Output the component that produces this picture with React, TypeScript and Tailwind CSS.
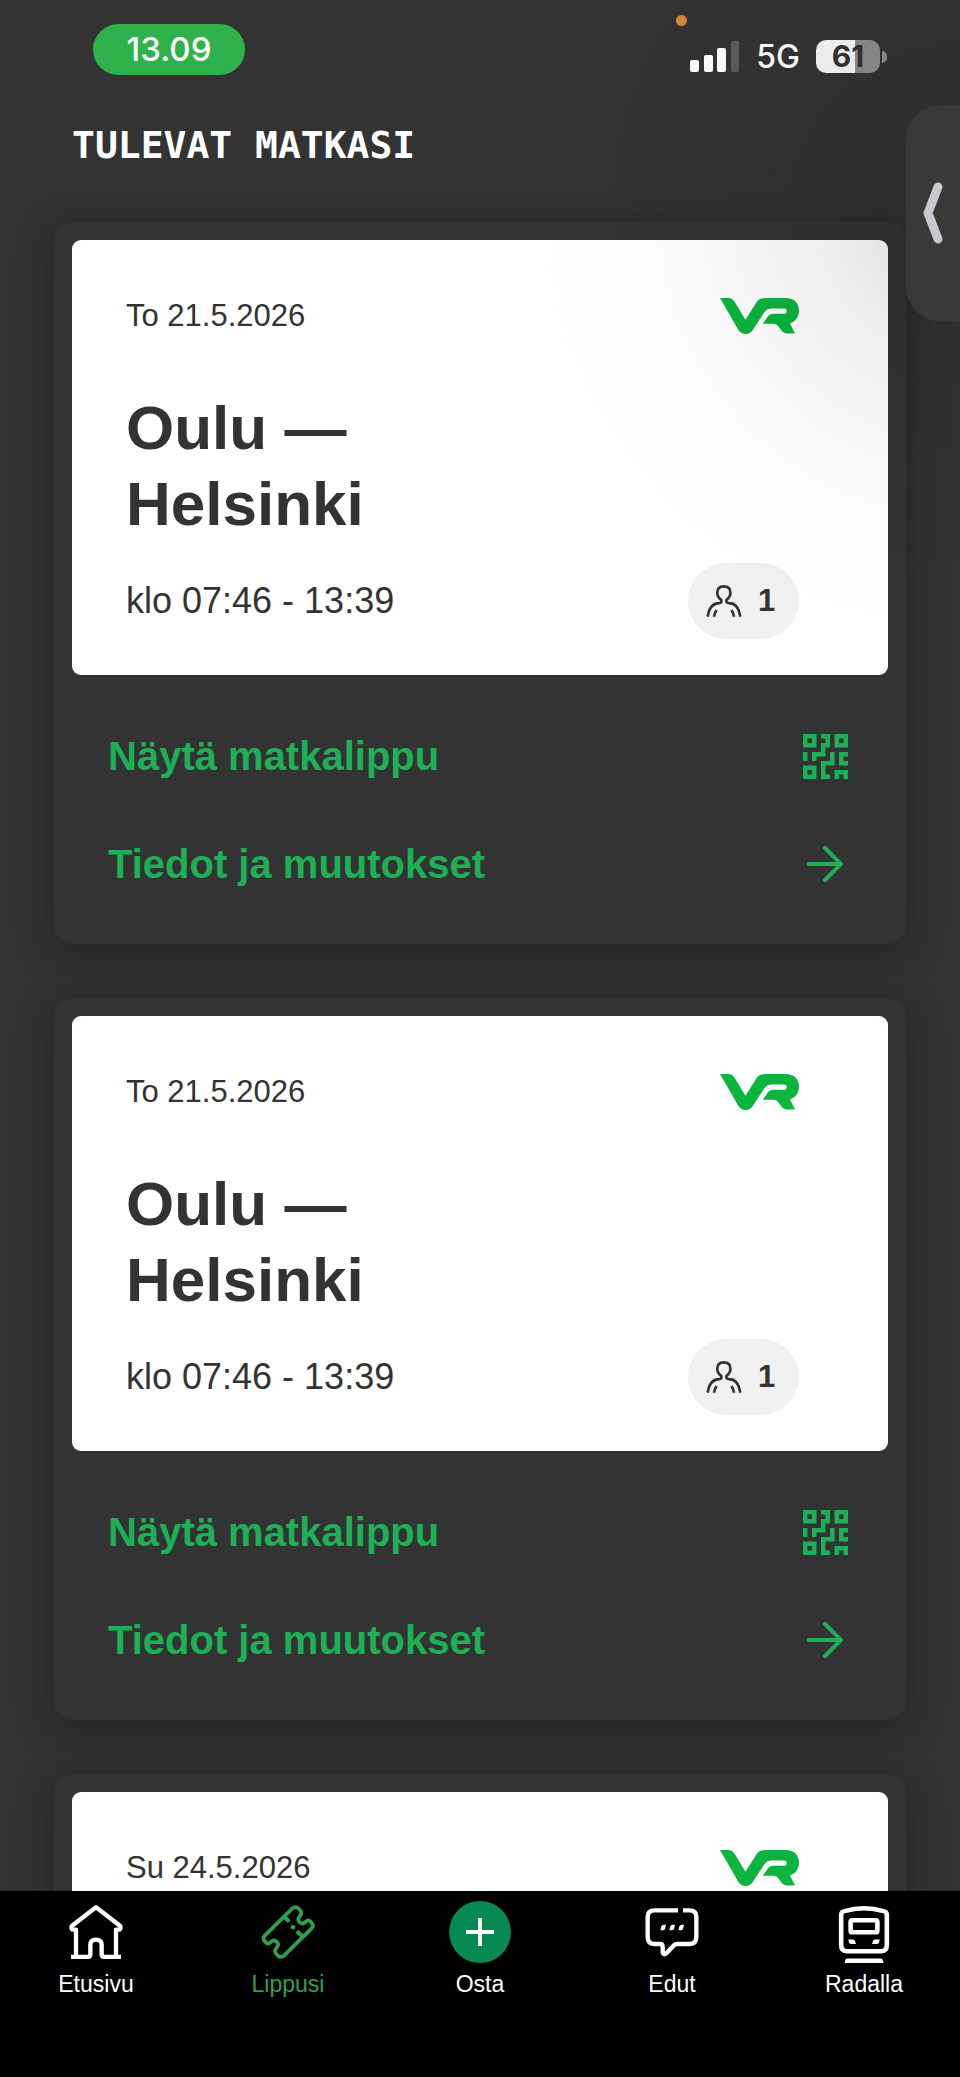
import type { ReactNode } from "react";

type Trip = {
  id: number;
  date: string;
  route?: { from: string; to: string; time: string; passengers: number };
};

const trips: Trip[] = [
  {
    id: 1,
    date: "To 21.5.2026",
    route: { from: "Oulu", to: "Helsinki", time: "klo 07:46 - 13:39", passengers: 1 },
  },
  {
    id: 2,
    date: "To 21.5.2026",
    route: { from: "Oulu", to: "Helsinki", time: "klo 07:46 - 13:39", passengers: 1 },
  },
  { id: 3, date: "Su 24.5.2026" },
];

function VrLogo() {
  return (
    <svg viewBox="0 0 236 107" className="h-9 w-[79px]" fill="#0bb43c" role="img" aria-label="VR">
      <path d="M0 0H25Q36 0 43 10L76 65L108 14Q117 0 134 0H196C222 0 236 16 236 38C236 56 226 70 209 76L224 106H203Q190 106 183 96L174 84Q169 77 160 77H128L140 59Q147 47 160 47H192Q199 47 199 39Q199 31 192 31H154Q140 31 132 43L98 95Q90 107 76 107Q63 107 55 95Z" />
    </svg>
  );
}

function PersonIcon() {
  return (
    <svg viewBox="0 0 107 97" className="h-8 w-9" fill="none" stroke="#333" strokeWidth="8" aria-hidden="true">
      <path d="M4 96C8 68 18 56 38 55Q49 54 45 45C37 39 33 34 33 24C33 10 41 4 53 4C65 4 73 10 73 24C73 34 69 39 61 45Q58 54 69 55C89 56 98 68 103 96" />
      <path d="M23 96C25 87 27 81 31 76M84 96C82 87 80 81 76 76" />
    </svg>
  );
}

function QrIcon() {
  return (
    <svg viewBox="0 0 10 10" className="size-[45px]" fill="currentColor" aria-hidden="true">
      <path fillRule="evenodd" d="M0 0h3v3H0zM1 1v1h1V1zM7 0h3v3H7zM8 1v1h1V1zM0 7h3v3H0zM1 8v1h1V8z" />
      <path d="M4 0h2v3H5v2H3v1H2V4h2V2h1V1H4zM0 4h1v2H0zM6 4h1v3H5v2h1v1H4V6h2zM8 4h2v1H9v1h1v1H8zM7 8h3v2H9V9H8v1H7z" />
    </svg>
  );
}

function ArrowIcon() {
  return (
    <svg viewBox="0 0 36 36" className="size-9" fill="none" stroke="currentColor" strokeWidth="4" aria-hidden="true">
      <path d="M0 18H33" />
      <path d="M18 2L34 18L18 34" strokeLinecap="round" />
    </svg>
  );
}

function HomeIcon() {
  return (
    <svg viewBox="0 0 160 162" className="size-[54px]" fill="none" stroke="currentColor" strokeWidth="13" aria-hidden="true">
      <path
        d="M5 156H54Q63 156 63 147V120Q63 104 80 104Q97 104 97 120V147Q97 156 106 156H155M20 156V74H14Q3 74 8 62L80 7L152 62Q157 74 146 74H140V156"
        strokeLinejoin="round"
      />
    </svg>
  );
}

function TicketIcon() {
  return (
    <svg viewBox="0 0 160 162" className="size-[54px]" fill="none" stroke="currentColor" strokeWidth="11" aria-hidden="true">
      <path
        d="M93 10Q103 2 112 11L118 18Q123 24 116 33Q106 43 115 52Q125 60 135 49Q140 44 146 48L151 54Q159 62 150 71L68 152Q58 160 49 151L43 144Q38 138 45 129Q55 119 46 110Q36 102 26 113Q21 118 15 114L10 108Q2 100 11 91Z"
        strokeLinejoin="round"
      />
      <path d="M71 37L84 50M89 64L101 69M106 79L122 92" strokeWidth="12" />
    </svg>
  );
}

function ChatIcon() {
  return (
    <svg viewBox="0 0 160 162" className="size-[54px]" fill="none" stroke="currentColor" strokeWidth="13" aria-hidden="true">
      <path d="M98 16H27Q7 16 7 36V96Q7 117 27 117H44Q52 117 52 125V142Q54 152 63 145L86 121Q90 117 96 117H133Q153 117 153 96V36Q153 16 133 16H113" />
      <path
        d="M45 76L48 64Q50 59 55 59H62L59 71Q57 76 53 76ZM72 76L75 64Q77 59 82 59H89L86 71Q84 76 80 76ZM99 76L102 64Q104 59 109 59H116L113 71Q111 76 107 76Z"
        fill="currentColor"
        stroke="none"
      />
    </svg>
  );
}

function TrainIcon() {
  return (
    <svg viewBox="-4 -15 162 190" className="h-[62px] w-[54px]" fill="none" stroke="currentColor" strokeWidth="14" aria-hidden="true">
      <path d="M7 28Q7 18 17 16Q77 -2 137 16Q147 18 147 28V120Q147 139 129 139H25Q7 139 7 120Z" />
      <rect x="36" y="44" width="82" height="37" rx="5" />
      <path
        d="M29 103H43Q48 103 50 108L52 117H38Q33 117 31 112ZM125 103H111Q106 103 104 108L102 117H116Q121 117 123 112ZM18 175L20 165Q21 161 27 161H127Q133 161 134 165L137 175Z"
        fill="currentColor"
        stroke="none"
      />
    </svg>
  );
}

function PlusIcon() {
  return (
    <span className="flex size-[62px] items-center justify-center rounded-full bg-[#058a52]">
      <svg viewBox="0 0 28 28" className="size-7" fill="none" stroke="currentColor" strokeWidth="4" aria-hidden="true">
        <path d="M14 0V28M0 14H28" />
      </svg>
    </span>
  );
}

function StatusBar() {
  return (
    <div className="flex items-start justify-between pt-6 pr-[73px] pl-[93px] font-[Inter,sans-serif] text-white">
      <div className="flex h-[51px] w-[152px] items-center justify-center rounded-full bg-[#2fb24c] text-[33px] font-medium">
        13.09
      </div>
      <div className="relative mt-4 flex h-[33px] items-center">
        <span className="absolute -top-[25px] -left-[14px] size-[11px] rounded-full bg-[#d9843b]" />
        <svg viewBox="0 0 50 31" className="h-[31px] w-[50px]" fill="#fff" aria-hidden="true">
          <rect x="0" y="19" width="9" height="12" rx="2" />
          <rect x="14" y="14" width="9" height="17" rx="2" />
          <rect x="27" y="7" width="9" height="24" rx="2" />
          <rect x="41" y="0" width="8" height="31" rx="2" fill="#5c5c5c" />
        </svg>
        <span className="ml-4 text-[32px] font-medium">5G</span>
        <span className="ml-4 flex h-[33px] w-16 items-center justify-center rounded-[10px] bg-[linear-gradient(90deg,#f7f7f7_61%,#8c8c8c_61%)] text-[30px] font-bold text-[#333]">
          61
        </span>
        <span className="ml-[2px] h-3 w-[5px] rounded-r-full bg-[#8c8c8c]" />
      </div>
    </div>
  );
}

function TripCard({ trip }: { trip: Trip }) {
  const { date, route } = trip;

  return (
    <article className="rounded-[18px] bg-[#333] px-[18px] pt-[18px] pb-[26px] shadow-[0_9px_36px_rgba(0,0,0,0.35)]">
      <div className="rounded-[9px] bg-white pt-[54px] pr-[89px] pb-9 pl-[54px] text-[#333]">
        <div className="flex h-11 items-center justify-between">
          <time className="text-[31px]">{date}</time>
          <VrLogo />
        </div>
        {route && (
          <>
            <h2 className="mt-[52px] text-[62px] leading-[76px] font-bold">
              {route.from} —<br />
              {route.to}
            </h2>
            <div className="mt-[21px] flex h-[76px] items-center justify-between">
              <p className="text-[36px]">{route.time}</p>
              <div className="flex h-full w-[111px] items-center gap-4 rounded-full bg-[#f0f0f0] pl-[18px]">
                <PersonIcon />
                <span className="text-[31px] font-bold">{route.passengers}</span>
              </div>
            </div>
          </>
        )}
      </div>
      {route && (
        <div className="mt-[27px] text-[40px] font-bold text-[#1db056]">
          <button type="button" className="flex h-[108px] w-full items-center justify-between px-9">
            Näytä matkalippu
            <span className="flex size-[54px] items-center justify-center">
              <QrIcon />
            </span>
          </button>
          <button type="button" className="flex h-[108px] w-full items-center justify-between px-9">
            Tiedot ja muutokset
            <span className="flex size-[54px] items-center justify-center">
              <ArrowIcon />
            </span>
          </button>
        </div>
      )}
    </article>
  );
}

function NavItem({ label, active, children }: { label: string; active?: boolean; children: ReactNode }) {
  return (
    <a
      href="#"
      aria-current={active ? "page" : undefined}
      className={`flex flex-1 flex-col items-center gap-[7px] ${active ? "text-[#2fa04f]" : "text-white"}`}
    >
      <span className="flex h-[62px] items-center">{children}</span>
      <span className="text-[23px] leading-7">{label}</span>
    </a>
  );
}

export default function App() {
  return (
    <div className="relative flex h-screen flex-col overflow-hidden bg-[#333] font-['Liberation_Sans',Arial,sans-serif]">
      <StatusBar />
      <main className="min-h-0 flex-1 overflow-y-auto px-[54px] [scrollbar-width:none]">
        <h1 className="mt-[46px] ml-[18px] font-['DejaVu_Sans_Mono',monospace] text-[38px] leading-[48px] font-bold text-white uppercase">
          Tulevat matkasi
        </h1>
        <div className="mt-[53px] flex flex-col gap-[54px]">
          {trips.map((trip) => (
            <TripCard key={trip.id} trip={trip} />
          ))}
        </div>
      </main>

      {/* Soft shade thrown by the collapsed video handle */}
      <div className="pointer-events-none absolute top-0 right-0 h-[700px] w-[440px] bg-[radial-gradient(circle_at_100%_213px,rgba(0,0,0,0.14),rgba(0,0,0,0.1)_80px,rgba(0,0,0,0.06)_160px,rgba(0,0,0,0.02)_290px,transparent_430px)]" />
      <button
        type="button"
        aria-label="Näytä video"
        className="absolute top-[105px] right-0 flex h-[216px] w-[54px] items-center justify-center rounded-l-[34px] bg-[#393939]"
      >
        <svg viewBox="0 0 20 62" className="h-[62px] w-5" fill="none" stroke="#c9c8ce" strokeWidth="9" strokeLinecap="round" strokeLinejoin="round" aria-hidden="true">
          <path d="M15 5L5 31L15 57" />
        </svg>
      </button>

      <nav className="relative flex shrink-0 bg-black pt-2.5 pb-[79px]">
        <NavItem label="Etusivu">
          <HomeIcon />
        </NavItem>
        <NavItem label="Lippusi" active>
          <TicketIcon />
        </NavItem>
        <NavItem label="Osta">
          <PlusIcon />
        </NavItem>
        <NavItem label="Edut">
          <ChatIcon />
        </NavItem>
        <NavItem label="Radalla">
          <TrainIcon />
        </NavItem>
      </nav>
    </div>
  );
}
